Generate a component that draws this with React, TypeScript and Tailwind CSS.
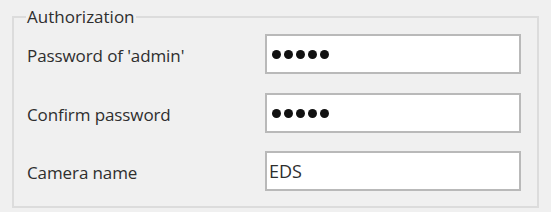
import React from "react";

function Dots() {
  return (
    <div className="flex items-center gap-[3px]">
      {[0, 1, 2, 3, 4].map((i) => (
        <span key={i} className="block w-[9px] h-[9px] rounded-full bg-[#111]" />
      ))}
    </div>
  );
}

function Row({ label, children, className = "" }: { label: string; children: React.ReactNode; className?: string }) {
  return (
    <div className={"flex items-center " + className}>
      <div className="w-[238px] pt-[3px] text-[17px] tracking-[-0.1px] text-[#2e2e2e]">{label}</div>
      <div className="w-[256px] h-[40px] bg-white border-2 border-[#b9b9b9] flex items-center">{children}</div>
    </div>
  );
}

export default function App() {
  return (
    <div
      className="w-[551px] h-[212px] bg-[#f0f0f0] pt-[6px] pl-[12px]"
      style={{ fontFamily: '"Open Sans", "Noto Sans", sans-serif' }}
    >
      <fieldset className="w-[527px] border-2 border-[#dcdcdc] pl-[13px] pr-[16px] pt-[6px] pb-[15px]">
        <legend className="-ml-[1px] px-[1px] text-[17px] leading-[22px] text-[#2e2e2e]">Authorization</legend>
        <Row label="Password of 'admin'">
          <div className="pl-[5px]"><Dots /></div>
        </Row>
        <Row label="Confirm password" className="mt-[19px]">
          <div className="pl-[5px]"><Dots /></div>
        </Row>
        <Row label="Camera name" className="mt-[18px]">
          <span className="pl-[2px] pt-[1px] text-[18px] text-[#2e2e2e]">EDS</span>
        </Row>
      </fieldset>
    </div>
  );
}
